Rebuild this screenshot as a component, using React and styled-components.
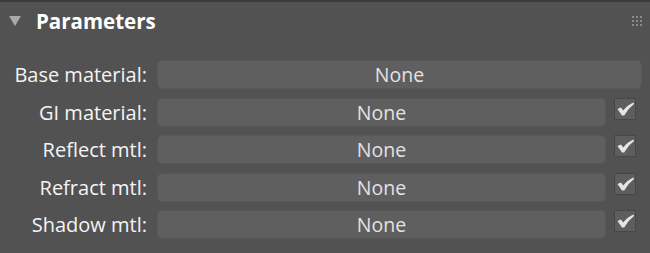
import styled, { createGlobalStyle } from "styled-components";

const GlobalStyle = createGlobalStyle`
    html, body {
        margin: 0;
        padding: 0;
        background: #525252;
    }
    body {
        font-family: "Open Sans", "Noto Sans", sans-serif;
    }
`;

const rows = [
    { label: "Base material:", value: "None", check: false },
    { label: "GI material:", value: "None", check: true },
    { label: "Reflect mtl:", value: "None", check: true },
    { label: "Refract mtl:", value: "None", check: true },
    { label: "Shadow mtl:", value: "None", check: true },
];

export default function App() {
    return (
        <>
            <GlobalStyle />
            <Panel>
                <Header>
                    <Arrow viewBox="0 0 12 10">
                        <polygon points="0,0 12,0 6,10" fill="#a9a9a9" />
                    </Arrow>
                    <Title>Parameters</Title>
                    <Grip viewBox="0 0 10 10">
                        {[0, 4, 8].map((y) =>
                            [0, 4, 8].map((x) => (
                                <rect key={x + "-" + y} x={x} y={y} width="2" height="2" fill="#8c8c8c" />
                            ))
                        )}
                    </Grip>
                </Header>
                <Rows>
                    {rows.map((row) => (
                        <Row key={row.label}>
                            <Label>{row.label}</Label>
                            <Field>{row.value}</Field>
                            {row.check && (
                                <CheckCell>
                                    <CheckBox>
                                        <svg width="17" height="14" viewBox="0 0 17 14">
                                            <path d="M0.5 7 L4 5.5 L6.2 8.5 Q10.5 3 16.5 0.5 L17 2 Q11 6.5 7.2 13.5 L5 13.5 Z" fill="#e6e6e6" />
                                        </svg>
                                    </CheckBox>
                                </CheckCell>
                            )}
                        </Row>
                    ))}
                </Rows>
            </Panel>
        </>
    );
}

const Panel = styled.div`
    width: 650px;
    height: 253px;
    box-sizing: border-box;
    border-top: 2px solid #3b3b3b;
    background: #525252;
`;

const Header = styled.div`
    display: flex;
    align-items: center;
    height: 38px;
    padding: 0 8px 0 9px;
`;

const Arrow = styled.svg`
    width: 12px;
    height: 10px;
    margin-right: 15px;
`;

const Title = styled.div`
    flex: 1;
    color: #ffffff;
    font-size: 20.5px;
    font-weight: 700;
`;

const Grip = styled.svg`
    width: 10px;
    height: 10px;
`;

const Rows = styled.div`
    display: flex;
    flex-direction: column;
    gap: 8.5px;
    padding: 20px 8px 0 0;
`;

const Row = styled.div`
    display: flex;
    align-items: flex-start;
    height: 29px;
`;

const Label = styled.div`
    width: 147px;
    margin-right: 10px;
    text-align: right;
    color: #f4f4f4;
    font-size: 20px;
    line-height: 30px;
    white-space: nowrap;
`;

const Field = styled.div`
    flex: 1;
    height: 29px;
    box-sizing: border-box;
    border: 1px solid #575757;
    border-radius: 5px;
    background: #5f5f5f;
    color: #e2e2e2;
    font-size: 19.5px;
    line-height: 28px;
    text-align: center;
`;

const CheckCell = styled.div`
    width: 36px;
    display: flex;
    padding-left: 8px;
    box-sizing: border-box;
`;

const CheckBox = styled.div`
    width: 22px;
    height: 22px;
    box-sizing: border-box;
    border: 1px solid #474747;
    background: #5e5e5e;
    display: flex;
    align-items: center;
    justify-content: center;
`;
